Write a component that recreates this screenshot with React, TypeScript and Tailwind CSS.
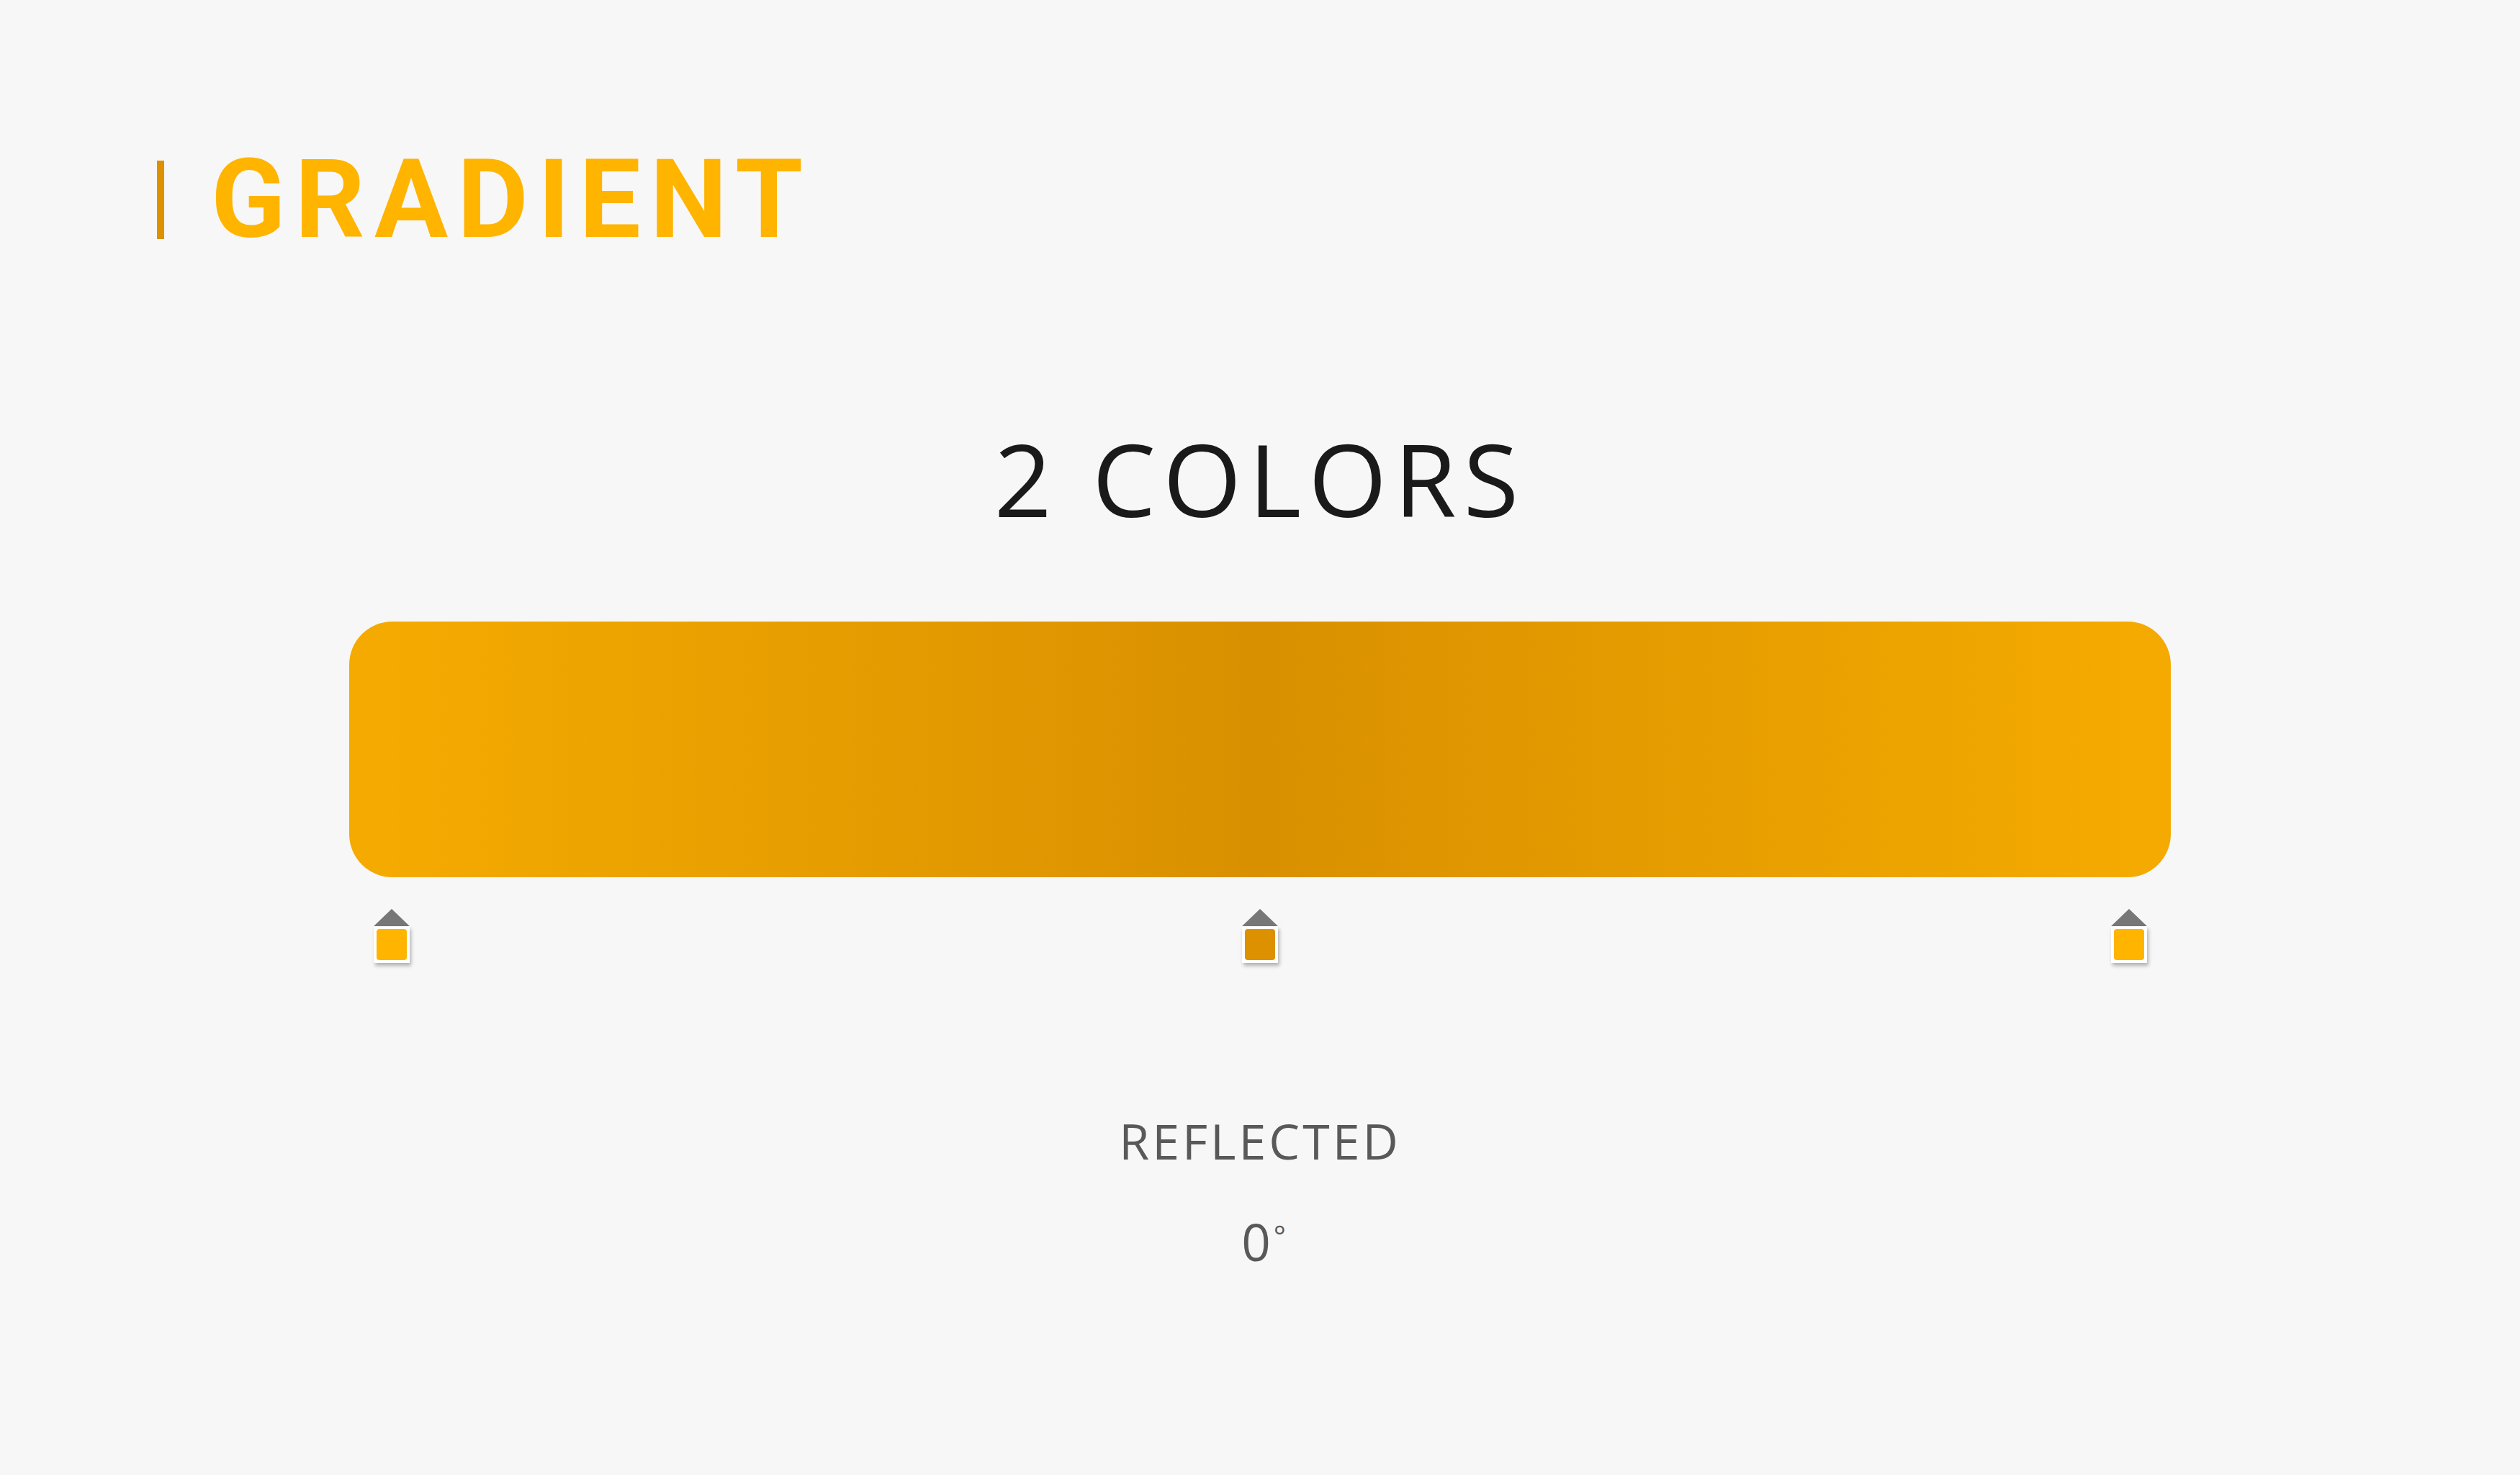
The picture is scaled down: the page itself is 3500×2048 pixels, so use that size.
import React from 'react';

type Stop = { pos: string; color: string };

const stops: Stop[] = [
  { pos: 'left-0', color: 'bg-[#ffb400]' },
  { pos: 'left-1/2', color: 'bg-[#dd9000]' },
  { pos: 'left-full', color: 'bg-[#ffb400]' },
];

function StopMarker({ stop }: { stop: Stop }) {
  return (
    <div className={`absolute top-0 ${stop.pos} -translate-x-1/2 flex flex-col items-center`}>
      <svg width="50" height="24" viewBox="0 0 50 24" className="block">
        <polygon points="25,0 50,24 0,24" fill="#777777" />
      </svg>
      <div className="w-[50px] h-[51px] bg-white p-[4px] shadow-[2px_4px_5px_rgba(0,0,0,0.28)]">
        <div className={`w-full h-full rounded-[4px] ${stop.color}`} />
      </div>
    </div>
  );
}

export default function App() {
  return (
    <div className="min-h-screen w-full bg-[#f7f7f7] flex flex-col font-['Open_Sans',sans-serif]">
      {/* header */}
      <div className="flex items-center pl-[218px] pt-[201px]">
        <div className="w-[10px] h-[109px] bg-[#dd9000]" />
        <h1 className="ml-[65px] text-[152px] leading-none font-bold tracking-[13px] text-[#ffb400] font-['Roboto',sans-serif]">
          GRADIENT
        </h1>
      </div>

      <h2 className="mt-[241px] text-center text-[140px] leading-none tracking-[10px] text-[#1a1a1a]">
        2 COLORS
      </h2>

      {/* gradient preview */}
      <div className="mt-[129px] mx-auto w-[2530px] h-[355px] rounded-[60px] bg-[linear-gradient(to_right,#f4aa00_2.3%,#d99000_50%,#f4aa00_97.7%)]" />

      {/* color stops */}
      <div className="relative mt-[44px] mx-auto w-[2413px] h-[75px]">
        {stops.map((s, i) => (
          <StopMarker key={i} stop={s} />
        ))}
      </div>

      <div className="mt-[213px] text-center text-[68px] leading-none tracking-[4px] text-[#595959]">
        REFLECTED
      </div>
      <div className="mt-[70px] flex justify-center items-start pl-[10px] text-[#595959] leading-none">
        <span className="text-[71px] leading-none">0</span>
        <span className="ml-[4px] mt-[8px] text-[40px] leading-none">°</span>
      </div>
    </div>
  );
}
